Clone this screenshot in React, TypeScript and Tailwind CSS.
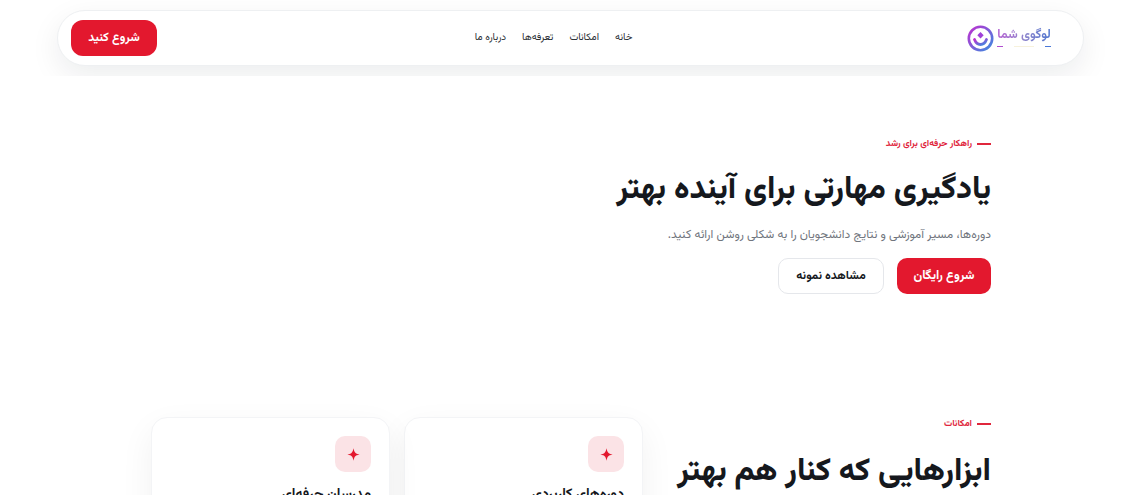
import React from "react";

function Logo() {
  return (
    <div className="flex h-[30px] w-[101px] items-center justify-end gap-[3px]" dir="ltr">
      <svg width="27" height="27" viewBox="0 0 27 27" fill="none" className="shrink-0">
        <defs>
          <linearGradient id="lg" x1="0" y1="0" x2="1" y2="1">
            <stop offset="0" stopColor="#c02fd0" />
            <stop offset="1" stopColor="#3a8be0" />
          </linearGradient>
        </defs>
        <circle cx="13.5" cy="13.5" r="11.7" stroke="url(#lg)" strokeWidth="2.6" />
        <path d="M13.5 7l3.2 3.2-3.2 3.2-3.2-3.2z" fill="#a040d8" />
        <path d="M7.5 14.5c1.5 4 4 5 6 5s4.5-1 6-5" stroke="url(#lg)" strokeWidth="2.8" strokeLinecap="round" />
      </svg>
      <div className="flex h-[22px] w-[54px] flex-col items-stretch">
        <span className="bg-gradient-to-r from-[#b45fd2] via-[#8f86cc] to-[#4f76cf] bg-clip-text text-center text-[12.5px] leading-[17px] font-bold whitespace-nowrap text-transparent" dir="rtl">لوگوی شما</span>
        <div className="mt-[2px] flex items-center justify-between">
          <span className="h-[1px] w-[6px] bg-[#b14fd0]" />
          <span className="h-[1px] w-[20px] bg-[#f7f2dc]" />
          <span className="h-[1px] w-[6px] bg-[#4a78d8]" />
        </div>
      </div>
    </div>
  );
}

function Eyebrow({ children }: { children: React.ReactNode }) {
  return (
    <div className="flex items-center gap-[5px] text-[9.2px] leading-[14px] font-bold text-[#e0263c]">
      <span className="h-[1.5px] w-[14px] bg-[#e0263c]" />
      {children}
    </div>
  );
}

function Card({ title }: { title: string }) {
  return (
    <div className="h-[200px] w-[239px] rounded-[16px] border border-[#f3f4f6] bg-white px-[18px] pt-[18px] shadow-[0_12px_34px_rgba(16,24,40,0.06)]">
      <div className="flex h-[36px] w-[36px] items-center justify-center rounded-[10px] bg-[#fbe3e6]">
        <svg width="13" height="13" viewBox="0 0 12 12"><path d="M6 0.3C6.5 2.6 7 3.9 7.7 4.3C8.2 5 9.4 5.5 11.7 6C9.4 6.5 8.2 7 7.7 7.7C7 8.1 6.5 9.4 6 11.7C5.5 9.4 5 8.1 4.3 7.7C4 7 2.6 6.5 0.3 6C2.6 5.5 4 5 4.3 4.3C5 3.9 5.5 2.6 6 0.3Z" fill="#e3182e" /></svg>
      </div>
      <h3 className="mt-[11px] text-[14px] leading-[24px] font-bold text-[#15181d]">{title}</h3>
    </div>
  );
}

export default function App() {
  return (
    <div dir="rtl" className="h-[495px] w-[1140px] overflow-hidden bg-white font-['Vazirmatn','Noto_Sans_Arabic',sans-serif] text-[#15181d]">
      <div className="h-[76px] overflow-hidden bg-white pt-[10px] pr-[56px] pl-[57px]">
        <header className="flex h-[56px] items-center justify-between rounded-[28px] border border-[#eef0f2] bg-white pr-[32px] pl-[13px] shadow-[0_10px_30px_rgba(16,24,40,0.08)]">
          <Logo />
          <nav className="flex items-center gap-[16px] text-[10px] leading-[16px] text-[#2b2f36]">
            <a>خانه</a>
            <a>امکانات</a>
            <a>تعرفه‌ها</a>
            <a>درباره ما</a>
          </nav>
          <button className="h-[36px] w-[86px] rounded-[12px] bg-[#e3182e] text-[12.2px] font-bold text-white">شروع کنید</button>
        </header>
      </div>
      <main className="pr-[149px] pl-[151px]">
        <section className="pt-[60px]">
          <div className="pt-[1px]">
            <Eyebrow>راهکار حرفه‌ای برای رشد</Eyebrow>
          </div>
          <h1 className="mt-[17px] text-[31.7px] leading-[44px] font-extrabold text-[#15181d]">یادگیری مهارتی برای آینده بهتر</h1>
          <p className="mt-[13px] text-[12px] leading-[20px] text-[#70757d]">دوره‌ها، مسیر آموزشی و نتایج دانشجویان را به شکلی روشن ارائه کنید.</p>
          <div className="mt-[13px] flex gap-[13px]">
            <button className="h-[36px] w-[94px] rounded-[10px] bg-[#e3182e] text-[12.5px] font-bold text-white">شروع رایگان</button>
            <button className="h-[36px] w-[106px] rounded-[10px] border border-[#e5e7eb] bg-white text-[12px] font-bold text-[#15181d]">مشاهده نمونه</button>
          </div>
        </section>
        <section className="mt-[123px] flex justify-between">
          <div className="w-[340px]">
            <Eyebrow>امکانات</Eyebrow>
            <h2 className="mt-[19px] text-[31.7px] leading-[44px] font-extrabold whitespace-nowrap">ابزارهایی که کنار هم بهتر</h2>
          </div>
          <div className="flex gap-[14px]">
            <Card title="دوره‌های کاربردی" />
            <Card title="مدرسان حرفه‌ای" />
          </div>
        </section>
      </main>
    </div>
  );
}
